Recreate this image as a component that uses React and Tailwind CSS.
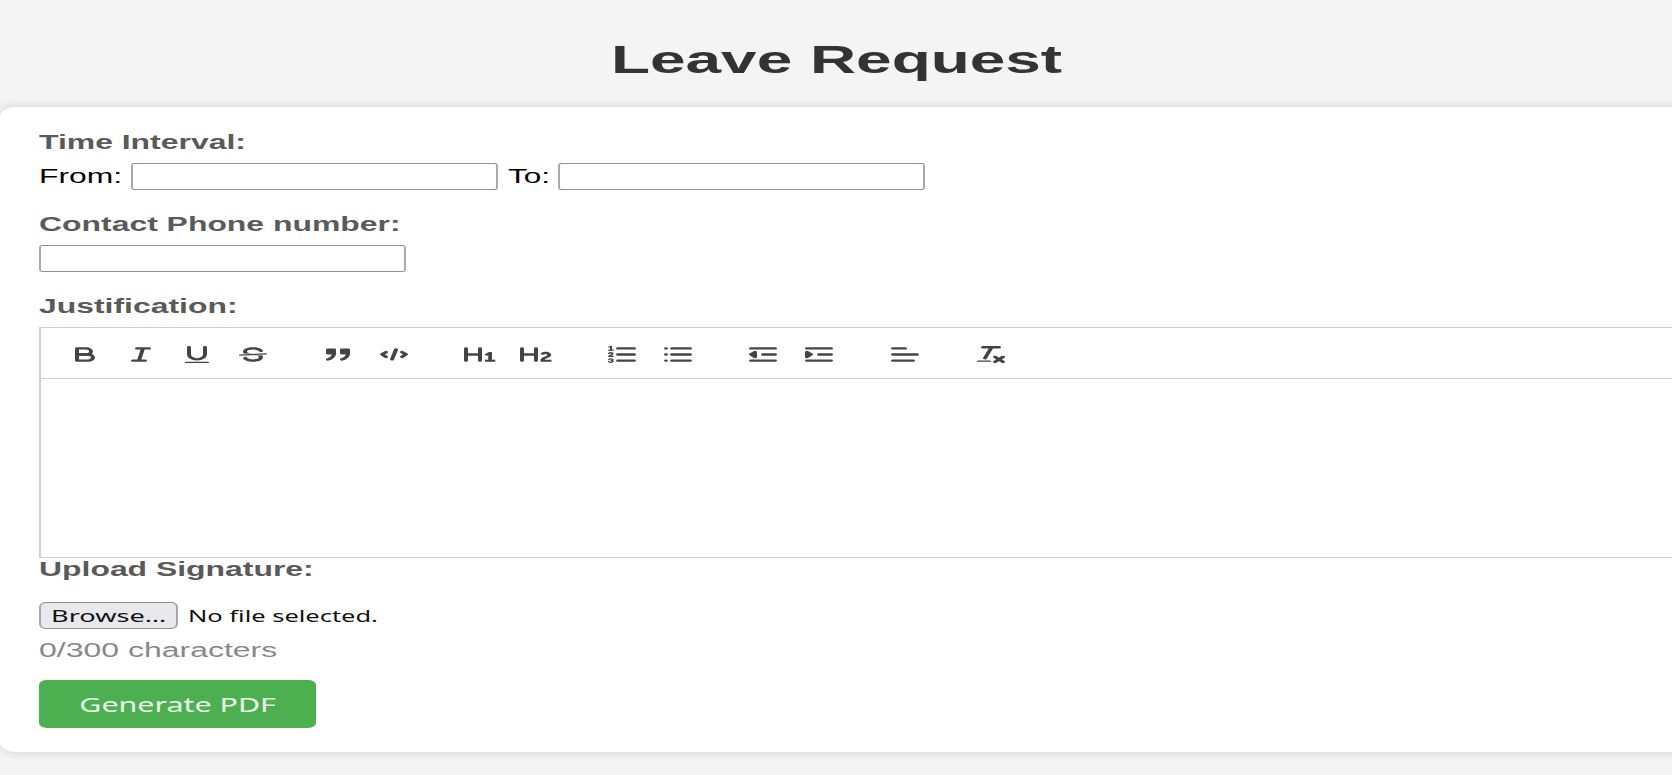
import React from "react";

function Label({ children, className = "" }) {
  return (
    <div className={"flex h-[22px] items-center whitespace-nowrap font-bold text-[#5a5a5a] " + className}>
      <span className="inline-block origin-left scale-x-[1.648] text-[19.36px] leading-[22px]">{children}</span>
    </div>
  );
}

function TextInput() {
  return (
    <input
      type="text"
      className="block h-[27px] w-[367px] shrink-0 rounded-[3px] border-x-2 border-y border-x-[#a9a8b6] border-y-[#8f8f9d] bg-white px-1 outline-none"
    />
  );
}

function Icon({ children }) {
  return (
    <button type="button" className="flex h-[29px] w-[55.9px] shrink-0 items-center justify-center">
      <svg
        viewBox="0 -0.4 18 18"
        preserveAspectRatio="none"
        className="h-[22px] w-[36px] fill-none stroke-[#444] stroke-2 [stroke-linecap:round] [stroke-linejoin:round]"
      >
        {children}
      </svg>
    </button>
  );
}

const Group = ({ children }) => <div className="mr-[29.9px] flex shrink-0">{children}</div>;

const solid = "fill-[#444] stroke-none";
const both = "fill-[#444]";
const thin = "stroke-1";

function Toolbar() {
  return (
    <div className="flex h-[52px] items-center border-y border-l-2 border-[#ccc] border-l-[#d2d2d2] pl-[16px] pt-[2px]">
      <Group>
        <Icon>
          <path d="M5,4H9.5A2.5,2.5,0,0,1,12,6.5v0A2.5,2.5,0,0,1,9.5,9H5A0,0,0,0,1,5,9V4A0,0,0,0,1,5,4Z" />
          <path d="M5,9h5.5A2.5,2.5,0,0,1,13,11.5v0A2.5,2.5,0,0,1,10.5,14H5a0,0,0,0,1,0,0V9A0,0,0,0,1,5,9Z" />
        </Icon>
        <Icon>
          <path d="M7,4H13M5,14H11M8,14L10,4" />
        </Icon>
        <Icon>
          <path d="M5,3V9a4.012,4.012,0,0,0,4,4H9a4.012,4.012,0,0,0,4-4V3" />
          <rect className={solid} height="1" rx="0.5" ry="0.5" width="12" x="3" y="15" />
        </Icon>
        <Icon>
          <path className={thin} d="M15.5,8.5L2.5,9.5" />
          <path className={solid} d="M9.007,8C6.542,7.791,6,7.519,6,6.5,6,5.792,7.283,5,9,5c1.571,0,2.765.679,2.969,1.309a1,1,0,0,0,1.9-.617C13.356,4.106,11.354,3,9,3,6.2,3,4,4.538,4,6.5a3.2,3.2,0,0,0,.5,1.843Z" />
          <path className={solid} d="M8.984,10C11.457,10.208,12,10.479,12,11.5c0,0.708-1.283,1.5-3,1.5-1.571,0-2.765-.679-2.969-1.309a1,1,0,1,0-1.9.617C4.644,13.894,6.646,15,9,15c2.8,0,5-1.538,5-3.5a3.2,3.2,0,0,0-.5-1.843Z" />
        </Icon>
      </Group>
      <Group>
        <Icon>
          <rect className={both} height="3" width="3" x="4" y="5" />
          <rect className={both} height="3" width="3" x="11" y="5" />
          <path className={both} d="M7,8c0,4.031-3,5-3,5" />
          <path className={both} d="M14,8c0,4.031-3,5-3,5" />
        </Icon>
        <Icon>
          <path d="M5,7L3,9L5,11M13,7L15,9L13,11M10,5L8,13" />
        </Icon>
      </Group>
      <Group>
        <Icon>
          <path className={solid} d="M10,4V14a1,1,0,0,1-2,0V10H3v4a1,1,0,0,1-2,0V4A1,1,0,0,1,3,4V8H8V4a1,1,0,0,1,2,0Zm6.06787,9.209H14.98975V7.59863a.54085.54085,0,0,0-.605-.60547h-.62744a1.01119,1.01119,0,0,0-.748.29688L11.645,8.56641a.5435.5435,0,0,0-.022.8584l.28613.30762a.53861.53861,0,0,0,.84717.0332l.09912-.08789a1.2137,1.2137,0,0,0,.2417-.35254h.02246s-.01123.30859-.01123.60547V13.209H12.041a.54085.54085,0,0,0-.605.60547v.43945a.54085.54085,0,0,0,.605.60547h4.02686a.54085.54085,0,0,0,.605-.60547v-.43945A.54085.54085,0,0,0,16.06787,13.209Z" />
        </Icon>
        <Icon>
          <path className={solid} d="M16.73975,13.81445v.43945a.54085.54085,0,0,1-.605.60547H11.855a.58392.58392,0,0,1-.64893-.60547V14.0127c0-2.90527,3.39941-3.42187,3.39941-4.55469a.77675.77675,0,0,0-.84717-.78125,1.17684,1.17684,0,0,0-.83594.38477c-.2749.26367-.561.374-.85791.13184l-.4292-.34082c-.30811-.24219-.38525-.51758-.1543-.81445a2.97155,2.97155,0,0,1,2.45361-1.17676,2.45393,2.45393,0,0,1,2.68408,2.40918c0,2.45312-3.1792,2.92676-3.27832,3.93848h2.79443A.54085.54085,0,0,1,16.73975,13.81445ZM9,3A.99974.99974,0,0,0,8,4V8H3V4A1,1,0,0,0,1,4V14a1,1,0,0,0,2,0V10H8v4a1,1,0,0,0,2,0V4A.99974.99974,0,0,0,9,3Z" />
        </Icon>
      </Group>
      <Group>
        <Icon>
          <path d="M7,4H15M7,9H15M7,14H15" />
          <path className={thin} d="M2.5,5.5H4.5" />
          <path className={solid} d="M3.5,6A0.5,0.5,0,0,1,3,5.5V3.085l-0.276.138A0.5,0.5,0,0,1,2.053,3c-0.124-.247-0.023-0.324.224-0.447l1-.5A0.5,0.5,0,0,1,4,2.5v3A0.5,0.5,0,0,1,3.5,6Z" />
          <path className={thin} d="M4.5,10.5h-2c0-.234,1.85-1.076,1.85-2.234A0.959,0.959,0,0,0,2.5,8.156" />
          <path className={thin} d="M2.5,14.846a0.959,0.959,0,0,0,1.85-.109A0.7,0.7,0,0,0,3.75,14a0.688,0.688,0,0,0,.6-0.736,0.959,0.959,0,0,0-1.85-.109" />
        </Icon>
        <Icon>
          <path d="M6,4H15M6,9H15M6,14H15M3,4H3M3,9H3M3,14H3" />
        </Icon>
      </Group>
      <Group>
        <Icon>
          <path d="M3,14H15M3,4H15M9,9H15" />
          <path className={both} d="M5,7V11L3,9Z" />
        </Icon>
        <Icon>
          <path d="M3,14H15M3,4H15M9,9H15" />
          <path className={both} d="M3,7V11L5,9Z" />
        </Icon>
      </Group>
      <Group>
        <Icon>
          <path d="M3,9H15M3,14H13M3,4H9" />
        </Icon>
      </Group>
      <Group>
        <Icon>
          <path d="M5,3H13M6,12L9.35,3M11,11L15,15M15,11L11,15" />
          <rect className={solid} height="1" rx="0.5" ry="0.5" width="7" x="2" y="14" />
        </Icon>
      </Group>
    </div>
  );
}

export default function App() {
  return (
    <div className="flex h-[775px] w-[1672px] flex-col overflow-hidden bg-[#f4f4f4] font-['Liberation_Sans',sans-serif] text-black">
      <h1 className="flex h-[107px] shrink-0 items-center justify-center pl-[2px] pt-[13px] font-bold text-[#333]">
        <span className="inline-block scale-x-[1.652] whitespace-nowrap text-[38.7px] leading-[44px]">Leave Request</span>
      </h1>

      <main className="h-[645px] w-[1720px] shrink-0 rounded-[16px/10px] bg-white pl-[39px] pt-[24px] shadow-[0_0_12px_rgba(0,0,0,0.15)]">
        <Label>Time Interval:</Label>
        <div className="mt-[10px] flex h-[27px] whitespace-nowrap text-[19.36px] leading-[27px]">
          <span className="w-[91.5px] shrink-0">
            <span className="inline-block origin-left scale-x-[1.645]">From:</span>
          </span>
          <TextInput />
          <span className="w-[60.5px] shrink-0 pl-[10px]">
            <span className="inline-block origin-left scale-x-[1.63]">To:</span>
          </span>
          <TextInput />
        </div>

        <Label className="mt-[23px]">Contact Phone number:</Label>
        <div className="mt-[10px]">
          <TextInput />
        </div>

        <Label className="mt-[23px]">Justification:</Label>
        <div className="mt-[10px]">
          <Toolbar />
          <div className="h-[179px] border-b border-l-2 border-b-[#ccc] border-l-[#d2d2d2]" />
        </div>

        <Label>Upload Signature:</Label>
        <div className="mt-[22px] flex h-[27px] items-center whitespace-nowrap font-['Noto_Sans',sans-serif] text-[16.13px] leading-[22px] text-[#111]">
          <button type="button" className="flex h-[27px] w-[139px] shrink-0 items-center rounded-[7px/5px] border-x-2 border-y border-x-[#a5a4b2] border-y-[#8f8f9d] bg-[#e9e9ed] pl-[10px]">
            <span className="inline-block origin-left scale-x-[1.685]">Browse…</span>
          </button>
          <span className="ml-[10px] inline-block origin-left scale-x-[1.58]">No file selected.</span>
        </div>
        <div className="mt-[10px] h-[22px] whitespace-nowrap text-[19.36px] leading-[22px] text-[#888]">
          <span className="inline-block origin-left scale-x-[1.652]">0/300 characters</span>
        </div>
        <button type="button" className="mt-[19px] flex h-[48px] w-[277px] items-center justify-center rounded-[8px/5px] bg-[#4caf50] pt-[1px] text-white/90">
          <span className="inline-block scale-x-[1.57] whitespace-nowrap font-['Noto_Sans',sans-serif] text-[19.36px] leading-[26px]">Generate PDF</span>
        </button>
      </main>
    </div>
  );
}
